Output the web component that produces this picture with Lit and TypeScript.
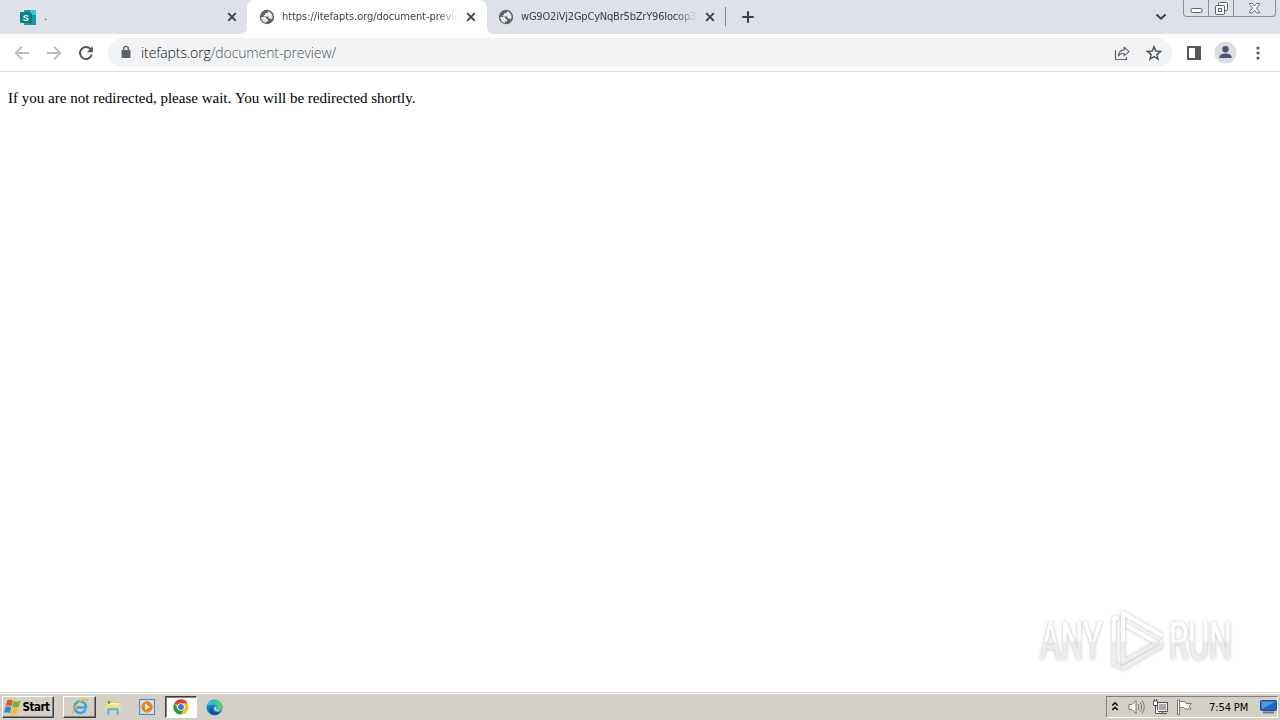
import { LitElement, html, css, svg } from "lit";
import { customElement } from "lit/decorators.js";

const closeIcon = html`<svg class="close" width="10" height="10" viewBox="0 0 10 10"><path d="M1.2 1.2 8.8 8.8M8.8 1.2 1.2 8.8" stroke="#3c4043" stroke-width="1.8"/></svg>`;
const globe = html`<svg class="globe" width="16" height="16" viewBox="0 0 16 16"><circle cx="8" cy="8" r="7.2" fill="#5f6368"/><path d="M2.2 8.1h3.5c1.4 0 2 1 2 2.2h1.2v2.1H7.2v1.5C4.5 13.6 2.3 11.2 2.2 8.1ZM9.1 2.2c0 1.3-.7 2-1.9 2H6v1.9H4.7v1.3h4.8v2h1.6c.8 0 1.4.5 1.7 1.2A5.8 5.8 0 0 0 9.1 2.2Z" fill="#e8eaed"/></svg>`;

@customElement("tab-strip")
class TabStrip extends LitElement {
  static styles = css`
    :host { display: flex; height: 34px; background: #dee1e7; font: 11px "DejaVu Sans Condensed", "DejaVu Sans", sans-serif; color: #3c4043; }
    .tab { display: flex; align-items: center; height: 34px; box-sizing: border-box; }
    .tab svg { flex: none; display: block; }
    .first { width: 247px; padding-left: 20px; border-bottom-right-radius: 7px; background: #dee1e7; }
    .under { background: #fff; }
    .active { width: 240px; padding-left: 12px; background: linear-gradient(#fff, #fff); border-radius: 8px 8px 0 0; }
    .third { width: 238px; padding-left: 11px; background: #dee1e7; border-bottom-left-radius: 7px; }
    .title { flex: none; margin-left: 7px; overflow: hidden; white-space: nowrap; width: 176px; line-height: 18px; -webkit-mask-image: linear-gradient(90deg, #000 88%, transparent); }
    .first .title { width: 171px; margin-left: 7px; }
    .active .title { letter-spacing: -0.06px; }
    .third .title { letter-spacing: -0.2px; }
    .close { margin-left: 8px; }
    .first .close { margin-left: 12px; }
    .bar { width: 1px; height: 19px; margin: 7px 0 0; background: #80868b; }
    .plus { margin: 11px 0 0 16px; }
    .down { margin: 13px 16px 0 auto; }
    .win { display: flex; width: 93px; height: 17px; box-sizing: border-box; border: 1px solid #8c9097; border-top: 0; border-radius: 0 0 4px 4px; margin-right: 4px; }
    .win span { display: flex; align-items: center; justify-content: center; border-right: 1px solid #8c9097; box-sizing: border-box; }
    .min { width: 25px; } .max { width: 25px; } .win .x { flex: 1; border: 0; }
  `;
  render() {
    return html`
      <div class="under"><div class="tab first">
        <svg width="17" height="17" viewBox="0 0 17 17"><path fill="#1a9ba1" d="M4 1h12v15H4z"/><path fill="#37c6d0" d="M10 1h6v5h-6z"/><path fill="#036c70" d="M4 5h8v9H4z"/><rect y="3" width="11" height="11" rx="1" fill="#038387"/><text x="2.7" y="11.6" font-family="Liberation Sans" font-weight="700" font-size="9" fill="#fff">S</text></svg>
        <span class="title">.</span>${closeIcon}</div></div>
      <div class="tab active">${globe}<span class="title">https://itefapts.org/document-preview/</span>${closeIcon}</div>
      <div class="under"><div class="tab third">${globe}<span class="title">wG9O2iVj2GpCyNqBr5bZrY96Iocop3</span>${closeIcon}</div></div>
      <div class="bar"></div>
      <svg class="plus" width="12" height="12" viewBox="0 0 12 12"><path d="M6 .3v11.4M.3 6h11.4" stroke="#3c4043" stroke-width="2"/></svg>
      <svg class="down" width="12" height="8" viewBox="0 0 12 8"><path d="m1.5 1.5 4.5 4.3 4.5-4.3" fill="none" stroke="#3c4043" stroke-width="1.9"/></svg>
      <div class="win">
        <span class="min"><svg width="13" height="16" viewBox="0 0 13 16"><rect x="1" y="8.5" width="11" height="4" rx="1.3" fill="#fff" stroke="#5d6169"/></svg></span>
        <span class="max"><svg width="15" height="16" viewBox="0 0 15 16"><g fill="#f3f4f6" stroke="#5d6169"><rect x="4.5" y="2.5" width="9" height="8" rx="1"/><rect x="1.5" y="5.5" width="9" height="9" rx="1"/><rect x="4.5" y="8.5" width="3" height="3"/></g></svg></span>
        <span class="x"><svg width="13" height="16" viewBox="0 0 13 16"><path d="M1.5 3.5h3l2 2.5 2-2.5h3v1L8.5 8.2l3 3.6v1h-3l-2-2.5-2 2.5h-3v-1l3-3.6-3-3.7Z" fill="#f3f4f6" stroke="#6a6e76" stroke-linejoin="round"/></svg></span>
      </div>`;
  }
}

@customElement("address-bar")
class AddressBar extends LitElement {
  static styles = css`
    :host { display: flex; align-items: center; height: 38px; box-sizing: border-box; border-bottom: 1px solid #d9dbde; background: #fff; padding-left: 14px; }
    svg { display: block; flex: none; }
    .fwd, .reload { margin-left: 16px; }
    .omni { display: flex; align-items: center; width: 1064px; height: 29px; border-radius: 15px; background: #f1f3f4; margin-left: 14px; padding: 0 10px 0 13px; box-sizing: border-box; }
    .lock { margin-bottom: 2px; }
    .url { margin-left: 10px; font: 300 14px/20px "Open Sans", "Noto Sans", sans-serif; color: #4f5358; letter-spacing: -0.11px; white-space: nowrap; }
    .host { color: #101114; }
    .share { margin-left: auto; }
    .star { margin-left: 16px; }
    .panel { margin-left: 15px; }
    .user { margin-left: 13px; }
    .dots { margin-left: 19px; }
  `;
  render() {
    return html`
      <svg width="16" height="16" viewBox="0 0 16 16"><path d="M15 8H2M8 1.7 1.8 8 8 14.3" fill="none" stroke="#babcbe" stroke-width="1.8"/></svg>
      <svg class="fwd" width="16" height="16" viewBox="0 0 16 16"><path d="M1 8h13M8 1.7 14.2 8 8 14.3" fill="none" stroke="#babcbe" stroke-width="1.8"/></svg>
      <svg class="reload" width="16" height="16" viewBox="0 0 16 16"><path d="M13.8 9.6A6 6 0 1 1 12.5 4" fill="none" stroke="#54585c" stroke-width="2"/><path d="M14.9 1v6.2H8.8Z" fill="#54585c"/></svg>
      <div class="omni">
        <svg class="lock" width="10" height="14" viewBox="0 0 10 14"><rect x=".5" y="5" width="9" height="8" rx="1" fill="#5f6368"/><path d="M2.6 5.5V3.800a2.400 2.400 0 0 1 4.800 0v1.700" fill="none" stroke="#5f6368" stroke-width="1.400"/></svg>
        <span class="url"><span class="host">itefapts.org</span>/document-preview/</span>
        <svg class="share" width="16" height="16" viewBox="0 0 16 16"><path d="M1.500 5v9.500h11V12" fill="none" stroke="#5f6368" stroke-width="1.200"/><path d="M4.200 11.200c.4-4 2.500-6 6-6.300V2.200l4.800 4.400-4.800 4.300V8.300c-2.800-.1-4.600.8-6 2.900Z" fill="none" stroke="#5f6368" stroke-width="1.100" stroke-linejoin="round"/></svg>
        <svg class="star" width="16" height="16" viewBox="0 0 16 16"><path d="m8 1.800 1.800 4.300 4.700.4-3.600 3.100 1.100 4.600L8 11.700l-4 2.500 1.100-4.600L1.500 6.500l4.700-.4Z" fill="none" stroke="#54585c" stroke-width="1.500"/></svg>
      </div>
      <svg class="panel" width="14" height="14" viewBox="0 0 14 14"><path d="M0 0h14v14H0ZM2 2v10h6V2Z" fill="#54585c" fill-rule="evenodd"/></svg>
      <svg class="user" width="23" height="23" viewBox="0 0 23 23"><circle cx="11.500" cy="11.500" r="11" fill="#dadde2"/><circle cx="11.500" cy="8.300" r="3.200" fill="#4a5472"/><path d="M5.500 17v-1.300c0-2 3.500-3.200 6-3.200s6 1.200 6 3.200V17Z" fill="#4a5472"/></svg>
      <svg class="dots" width="4" height="14" viewBox="0 0 4 14"><g fill="#54585c"><circle cx="2" cy="2" r="1.600"/><circle cx="2" cy="7" r="1.600"/><circle cx="2" cy="12" r="1.600"/></g></svg>`;
  }
}

@customElement("task-bar")
class TaskBar extends LitElement {
  static styles = css`
    :host { display: flex; align-items: center; height: 28px; box-sizing: border-box; background: #d4d0c8; border-top: 1px solid #d4d0c8; box-shadow: inset 0 1px #fff; padding: 1px 2px 0; font: 11px "DejaVu Sans Condensed", "DejaVu Sans", sans-serif; color: #000; }
    svg { display: block; flex: none; }
    .btn { display: flex; align-items: center; justify-content: center; box-sizing: border-box; height: 22px; border: 1px solid; border-color: #fff #404040 #404040 #fff; box-shadow: inset -1px -1px #808080; }
    .start { width: 52px; font-weight: 700; font-size: 11.500px; letter-spacing: -0.45px; gap: 0; padding-right: 2px; }
    .ie { width: 33px; margin-left: 9px; }
    .folder { margin-left: 8px; }
    .media { margin-left: 17px; }
    .chrome { width: 32px; margin-left: 10px; background: #fff; border-color: #404040 #fff #fff #404040; box-shadow: inset 1px 1px #808080; }
    .edge { margin-left: 9px; }
    .tray { display: flex; align-items: center; box-sizing: border-box; margin-left: auto; width: 172px; height: 22px; border: 1px solid; border-color: #808080 #fff #fff #808080; padding-left: 4px; }
    .vol { margin-left: 9px; } .net { margin-left: 7px; } .flag { margin-left: 7px; }
    .time { margin-left: 16px; width: 40px; letter-spacing: -0.1px; white-space: nowrap; }
    .desk { margin-left: 11px; }
  `;
  render() {
    return html`
      <div class="btn start">
        <svg width="18" height="17" viewBox="0 0 17 16"><path d="M3.200 1.200C5 0 6.500.2 8.300 1.200L7 7C5.200 6 3.700 5.900 1.400 6.900Z" fill="#e8592b"/><path d="M9 1.600c1.900 1 4.100 1 6.800-.2L14 7.200c-2 1.200-4.500 1.200-6.300.2Z" fill="#79b530"/><path d="M1.200 7.700c1.800-1 3.800-.9 5.600.1l-1.300 5.600c-1.800-1-3.300-1.100-5.600-.1Z" fill="#3a84cf"/><path d="M7.500 8.200c1.800 1 4.200 1 6.200-.2l-1.600 5.900c-2 1.200-4.100 1.200-5.900.2Z" fill="#f5bd25"/></svg>Start</div>
      <div class="btn ie"><svg width="18" height="18" viewBox="0 0 18 18"><path d="M14.500 11.600A5.800 5.800 0 1 1 15 9.500H5.500" fill="none" stroke="#3aa4e0" stroke-width="2.500"/><path d="M2.200 16C.2 14.500 3 8.500 8 4.500s9.500-4.500 8.400-.5" fill="none" stroke="#efb82e" stroke-width="1.300"/></svg></div>
      <svg class="folder" width="18" height="18" viewBox="0 0 18 18"><path d="M2 4V2.500h5L8 4h7.500v9H2Z" fill="#e4c572"/><path d="M3 5h12v5H3Z" fill="#fff1b0"/><path d="M1.500 6.500h15v7h-15Z" fill="#f3dc8c"/><path d="M3 16.500v-4.500q0-2 2-2h8q2 0 2 2v4.500h-2.500v-4h-7v4Z" fill="#68b9db"/><path d="M4 3h2v3H4Z" fill="#54a854"/></svg>
      <svg class="media" width="16" height="16" viewBox="0 0 16 16"><rect x=".5" y=".5" width="15" height="15" fill="#b9d9ef" stroke="#4d91c1"/><rect x="2" y="2" width="12" height="12" fill="#d8e7ee"/><circle cx="8" cy="8" r="5.700" fill="#f28218"/><path d="m6.300 4.700 4.800 3.300-4.800 3.300Z" fill="#fff"/></svg>
      <div class="btn chrome"><svg width="16" height="16" viewBox="0 0 16 16"><circle cx="8" cy="8" r="7.600" fill="#fbc116"/><path d="M8 8 1.400 4.200a7.600 7.600 0 0 1 13.200 0H8Z" fill="#e33b2e"/><path d="M1.400 4.200A7.600 7.600 0 0 0 7.600 15.600L11.300 10 8 8 4.700 9.900Z" fill="#249a47"/><circle cx="8" cy="8" r="3.800" fill="#fff"/><circle cx="8" cy="8" r="2.900" fill="#3478e5"/></svg></div>
      <svg class="edge" width="17" height="17" viewBox="0 0 17 17"><circle cx="8.500" cy="8.500" r="7.900" fill="#1279c9"/><path d="M.7 8A7.900 7.900 0 0 1 16.400 8c.2 3.300-3.900 4-6 2.800 1.500-2.500-.4-5-3.600-5C3.500 5.800 1.500 7 .7 8Z" fill="#35bfd1"/><path d="M9 .7C13 .8 16.300 4 16.400 8c.2 3-3.400 4-5.700 3 1-3 3-6-1.700-10.300Z" fill="#58cf70"/><path d="M7 7.500c-2 4 2 7 7.500 5.200-2.200 3.500-6 4-8.500 2.800C2.500 13.500 3 9 7 7.500Z" fill="#1255a5"/><path d="M8.700 7.500c-1.400 1.800-.5 4.500 2.800 4.900 1.700.1 3-.4 4.200-1.200-2 .5-4 .4-5.300-.5.7-1.300.2-2.800-1.700-3.200Z" fill="#d4d0c8"/></svg>
      <div class="tray">
        <svg width="8" height="12" viewBox="0 0 8 12"><path d="M1.300 4.500 4 1.800l2.700 2.700M1.300 9 4 6.300 6.700 9" fill="none" stroke="#000" stroke-width="1.500"/></svg>
        <svg class="vol" width="17" height="16" viewBox="0 0 17 16"><path d="M1 5.500h3l4-4v13l-4-4H1Z" fill="#f8f8f8" stroke="#777"/><path d="M10 5q2 3 0 6M12 3.200q3.300 4.800 0 9.600M14 1.500q4.500 6.500 0 13" fill="none" stroke="#777"/></svg>
        <svg class="net" width="17" height="16" viewBox="0 0 17 16"><rect x="5.500" y="3.500" width="10" height="9" fill="#eee" stroke="#555"/><rect x="7" y="5" width="7" height="6" fill="#aaa"/><path d="M6 14.500h9M10.500 13v1" stroke="#555"/><path d="M1.500 2v4.500h4V2ZM2.500 0v2M4.500 0v2M3.500 7v7.500H7" fill="#fff" stroke="#555"/></svg>
        <svg class="flag" width="17" height="16" viewBox="0 0 17 16"><path d="M1.500 1v14.500h2V1Z" fill="#fff" stroke="#777"/><path d="M3.500 2.500h5l1.500 2h5.500L13 7l2 3H9L7.500 8.500h-4Z" fill="#fff" stroke="#777"/></svg>
        <span class="time">7:54 PM</span>
        <svg class="desk" width="17" height="14" viewBox="0 0 17 14"><rect x=".5" y=".5" width="16" height="10" rx="1" fill="#1e67c3" stroke="#254a80"/><path d="M1.500 1.500h14L2 9Z" fill="#4d9ae5"/><path d="M3 12.500h11" stroke="#777" stroke-width="2"/></svg>
      </div>`;
  }
}

const markShapes = svg`
  <text x="20" y="59" font-size="51" textLength="62" lengthAdjust="spacingAndGlyphs">ANY</text>
  <text x="149" y="59" font-size="51" textLength="63" lengthAdjust="spacingAndGlyphs">RUN</text>
  <g fill="none" stroke-width="4" stroke-linejoin="round" stroke-linecap="round">
    <path d="M103 60V13l38 22"/><path d="m108 26 29 17-34 19"/><path d="M97 18h-3v46l5 2"/><path d="m103 68 38-22v-4"/>
  </g>`;

@customElement("any-run-mark")
class AnyRunMark extends LitElement {
  static styles = css`
    :host { display: block; width: 230px; height: 80px; }
    svg { display: block; overflow: visible; font-family: "Liberation Sans Narrow", "Roboto", sans-serif; font-weight: 400; filter: drop-shadow(0 0 1.500px rgba(0,0,0,.2)) drop-shadow(0 1px 2px rgba(0,0,0,.08)); }
    .ink { fill: url(#fade); stroke: url(#fade); }
    .ink text { stroke-width: .6; }
  `;
  render() {
    return html`<svg width="230" height="80" viewBox="0 0 230 80"><defs><linearGradient id="fade" gradientUnits="userSpaceOnUse" x1="0" y1="0" x2="0" y2="80"><stop offset=".5" stop-color="#fff"/><stop offset=".53" stop-color="#ececec"/><stop offset="1" stop-color="#f1f1f1"/></linearGradient></defs><g class="ink">${markShapes}</g></svg>`;
  }
}

@customElement("app-root")
class AppRoot extends LitElement {
  static styles = css`
    :host { display: flex; flex-direction: column; position: relative; width: 1280px; height: 720px; overflow: hidden; background: #fff; }
    .page { flex: 1; padding: 17px 8px; font: 15px/18px "Liberation Serif", "Times New Roman", serif; letter-spacing: -0.025px; color: #000; }
    .page p { margin: 0; }
    .lead { word-spacing: 0.15px; }
    .mark { position: absolute; left: 1020px; top: 600px; }
  `;
  render() {
    return html`<tab-strip></tab-strip><address-bar></address-bar>
      <main class="page"><p><span class="lead">If you are not redirected, please wait. </span>You will be redirected shortly.</p></main>
      <task-bar></task-bar><any-run-mark class="mark"></any-run-mark>`;
  }
}
